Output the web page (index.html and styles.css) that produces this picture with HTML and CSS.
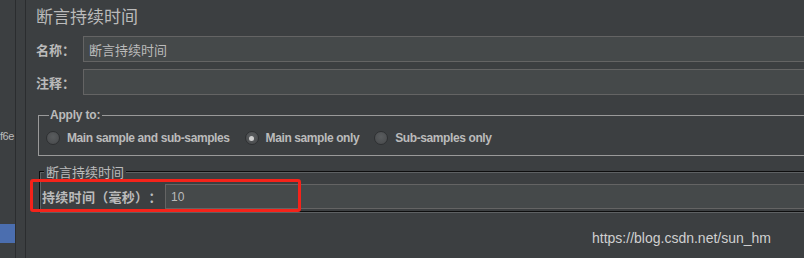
FILE: index.html
```html
<!DOCTYPE html>
<html lang="zh-CN">
<head>
    <meta charset="UTF-8">
    <meta name="viewport" content="width=device-width, initial-scale=1.0">
    <title>断言持续时间</title>
    <link rel="stylesheet" href="styles.css">
</head>
<body>
    <div class="app">
        <div class="sidebar">
            <div class="tree-item">f6e</div>
            <div class="tree-selected"></div>
        </div>
        <div class="splitter"></div>
        <div class="main">
            <h2 class="title">断言持续时间</h2>
            <div class="form-row">
                <label class="row-label" for="name">名称：</label>
                <input type="text" id="name" class="field" value="断言持续时间">
            </div>
            <div class="form-row">
                <label class="row-label" for="comment">注释：</label>
                <input type="text" id="comment" class="field" value="">
            </div>

            <fieldset class="apply-box">
                <legend>Apply to:</legend>
                <div class="radio-row">
                    <span class="radio"><span class="dot"></span>Main sample and sub-samples</span>
                    <span class="radio checked"><span class="dot"></span>Main sample only</span>
                    <span class="radio"><span class="dot"></span>Sub-samples only</span>
                </div>
            </fieldset>

            <fieldset class="duration-box">
                <legend>断言持续时间</legend>
                <div class="duration-row">
                    <label class="duration-label" for="duration">持续时间（毫秒）：</label>
                    <input type="text" id="duration" class="field duration-field" value="10">
                </div>
            </fieldset>
        </div>
    </div>
    <div class="highlight"></div>
    <div class="watermark">https://blog.csdn.net/sun_hm</div>
</body>
</html>
```

FILE: styles.css
```css
body {
    margin: 0;
    width: 804px;
    height: 258px;
    overflow: hidden;
    position: relative;
    background-color: #3c3f41;
    color: #bbbbbb;
    font-family: "Liberation Sans", "Noto Sans CJK SC", sans-serif;
}

.app {
    display: flex;
    height: 258px;
}

.sidebar {
    width: 15px;
    flex-shrink: 0;
    border-right: 1px solid #2b2d2f;
    overflow: hidden;
    position: relative;
}

.tree-item {
    position: absolute;
    top: 130px;
    left: 0;
    font-size: 11px;
    letter-spacing: -0.5px;
    white-space: nowrap;
}

.tree-selected {
    position: absolute;
    top: 224px;
    left: 0;
    width: 15px;
    height: 19px;
    background-color: #4b6eaf;
}

.splitter {
    width: 9px;
    flex-shrink: 0;
    border-right: 1px solid #2b2d2f;
}

.main {
    width: 900px;
    flex-shrink: 0;
    padding: 6px 0 0 10px;
    box-sizing: border-box;
    font-family: "Noto Sans CJK SC", sans-serif;
    text-spacing-trim: space-all;
}

.title {
    margin: 0 0 10px 0;
    height: 20px;
    line-height: 20px;
    font-size: 17px;
    font-weight: normal;
    color: #bbbbbb;
}

.form-row {
    display: flex;
    align-items: center;
    height: 26px;
    margin-bottom: 7px;
}

.row-label {
    width: 47px;
    font-size: 13px;
    font-weight: bold;
    color: #bbbbbb;
}

.field {
    flex: 1;
    height: 26px;
    box-sizing: border-box;
    padding: 0 5px;
    background-color: #45494a;
    border: 1px solid #646464;
    color: #bbbbbb;
    font-size: 13px;
    font-family: "Noto Sans CJK SC", sans-serif;
    outline: none;
}

.apply-box {
    margin: 13px 0 0 2px;
    padding: 6px 0 7px 7px;
    border: 1px solid #9a9a9a;
}

.apply-box legend {
    margin-left: 3px;
    padding: 0 2px 0 1px;
    font-family: "Liberation Sans", sans-serif;
    font-size: 12px;
    font-weight: bold;
    letter-spacing: -0.2px;
    color: #bbbbbb;
}

.radio-row {
    display: flex;
    align-items: center;
    height: 20px;
    font-family: "Liberation Sans", sans-serif;
    font-size: 12px;
    font-weight: bold;
    letter-spacing: -0.4px;
}

.radio {
    display: flex;
    align-items: center;
    margin-right: 15px;
}

.dot {
    flex-shrink: 0;
    width: 14px;
    height: 14px;
    margin-right: 7px;
    border-radius: 50%;
    box-sizing: border-box;
    background: radial-gradient(circle at 50% 40%, #5a5d5f, #47494b);
    border: 1px solid #2e3032;
    display: flex;
    align-items: center;
    justify-content: center;
}

.checked .dot::after {
    content: "";
    width: 5px;
    height: 5px;
    border-radius: 50%;
    background-color: #cfcfcf;
}

.duration-box {
    margin: 6px 0 0 3px;
    padding: 3px 0 2px 1px;
    border: 2px groove #5e6163;
}

.duration-box legend {
    margin-left: 2px;
    padding: 0 2px;
    font-size: 13px;
    color: #bbbbbb;
}

.duration-row {
    display: flex;
    align-items: center;
    height: 25px;
}

.duration-label {
    width: 123px;
    font-size: 13px;
    font-weight: bold;
    letter-spacing: 0.3px;
    color: #bbbbbb;
}

.duration-field {
    height: 25px;
    font-family: "Liberation Sans", sans-serif;
    font-size: 12px;
}

.highlight {
    position: absolute;
    left: 30px;
    top: 179px;
    width: 265px;
    height: 27px;
    border: 3px solid #f5231a;
    border-radius: 3px;
}

.watermark {
    position: absolute;
    left: 592px;
    top: 230px;
    font-family: "Liberation Sans", sans-serif;
    font-size: 14px;
    color: #d0d0d0;
}
```
